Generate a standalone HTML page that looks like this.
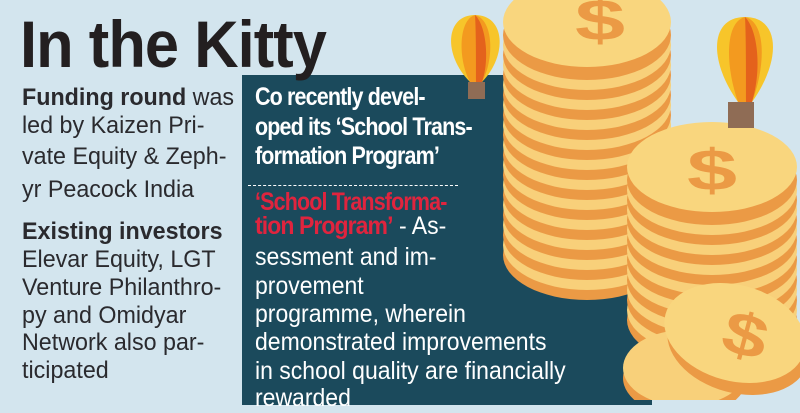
<!DOCTYPE html>
<html><head><meta charset="utf-8"><style>
html,body{margin:0;padding:0}
body{width:800px;height:400px;overflow:hidden;background:#d3e5ee;position:relative;font-family:"Liberation Sans",sans-serif}
.box{position:absolute;left:242px;top:75px;width:410px;height:330px;background:#1b4a5c}
.t{position:absolute;white-space:nowrap;transform-origin:0 0}
.title{left:20px;top:6px;font-size:66px;font-weight:bold;color:#231f20;transform:scaleX(0.93);letter-spacing:-1px}
.l{left:22px;font-size:24px;color:#2a2a2e;transform:scaleX(0.97)}
.r{left:255px;font-size:25px;color:#fff;transform:scaleX(0.92)}
.rb{transform:scaleX(0.86)}
.b{font-weight:bold}
.red{color:#e0243e;font-weight:bold}
svg{position:absolute;left:0;top:0}
</style></head><body>
<div class="box"></div>
<div class="t title">In the Kitty</div>
<div class="t l" style="top:84px"><span class="b">Funding round</span> was</div>
<div class="t l" style="top:112px">led by Kaizen Pri-</div>
<div class="t l" style="top:143px">vate Equity &amp; Zeph-</div>
<div class="t l" style="top:176px">yr Peacock India</div>
<div class="t l b" style="top:218px">Existing investors</div>
<div class="t l" style="top:246px">Elevar Equity, LGT</div>
<div class="t l" style="top:274px">Venture Philanthro-</div>
<div class="t l" style="top:302px">py and Omidyar</div>
<div class="t l" style="top:329px">Network also par-</div>
<div class="t l" style="top:357px">ticipated</div>

<div class="t r rb b" style="top:83px;letter-spacing:-1px">Co recently devel-</div>
<div class="t r rb b" style="top:113px;letter-spacing:-1px">oped its ‘School Trans-</div>
<div class="t r rb b" style="top:142px;letter-spacing:-1px">formation Program’</div>
<div style="position:absolute;left:248px;top:185px;width:210px;border-top:1.5px dashed #fff"></div>
<div class="t r rb red" style="top:188px;letter-spacing:-1px">‘School Transforma-</div>
<div class="t r" style="top:212px"><span class="red" style="letter-spacing:-1px">tion Program’</span> - As-</div>
<div class="t r" style="top:243px">sessment and im-</div>
<div class="t r" style="top:272px">provement</div>
<div class="t r" style="top:300px">programme, wherein</div>
<div class="t r" style="top:328px">demonstrated improvements</div>
<div class="t r" style="top:357px">in school quality are financially</div>
<div class="t r" style="top:384px">rewarded</div>

<svg width="800" height="400" viewBox="0 0 800 400">
<g>
<ellipse cx="587" cy="255" rx="84" ry="45" fill="#eb9a45"/><ellipse cx="587" cy="245" rx="84" ry="45" fill="#f8d07a"/>
<ellipse cx="587" cy="235" rx="84" ry="45" fill="#eb9a45"/><ellipse cx="587" cy="225" rx="84" ry="45" fill="#f8d07a"/>
<ellipse cx="587" cy="215" rx="84" ry="45" fill="#eb9a45"/><ellipse cx="587" cy="205" rx="84" ry="45" fill="#f8d07a"/>
<ellipse cx="587" cy="195" rx="84" ry="45" fill="#eb9a45"/><ellipse cx="587" cy="185" rx="84" ry="45" fill="#f8d07a"/>
<ellipse cx="587" cy="175" rx="84" ry="45" fill="#eb9a45"/><ellipse cx="587" cy="165" rx="84" ry="45" fill="#f8d07a"/>
<ellipse cx="587" cy="155" rx="84" ry="45" fill="#eb9a45"/><ellipse cx="587" cy="145" rx="84" ry="45" fill="#f8d07a"/>
<ellipse cx="587" cy="135" rx="84" ry="45" fill="#eb9a45"/><ellipse cx="587" cy="125" rx="84" ry="45" fill="#f8d07a"/>
<ellipse cx="587" cy="115" rx="84" ry="45" fill="#eb9a45"/><ellipse cx="587" cy="105" rx="84" ry="45" fill="#f8d07a"/>
<ellipse cx="587" cy="95" rx="84" ry="45" fill="#eb9a45"/><ellipse cx="587" cy="85" rx="84" ry="45" fill="#f8d07a"/>
<ellipse cx="587" cy="75" rx="84" ry="45" fill="#eb9a45"/><ellipse cx="587" cy="65" rx="84" ry="45" fill="#f8d07a"/>
<ellipse cx="587" cy="55" rx="84" ry="45" fill="#eb9a45"/><ellipse cx="587" cy="45" rx="84" ry="45" fill="#f8d07a"/>
<ellipse cx="587" cy="35" rx="84" ry="45" fill="#eb9a45"/><ellipse cx="587" cy="22" rx="84" ry="45" fill="#f9d67e"/>
<text transform="translate(600,40) scale(1,0.65)" font-size="90" font-weight="bold" fill="#eb9a45" text-anchor="middle" font-family="Liberation Sans">$</text>
</g>
<g>
<ellipse cx="712" cy="320" rx="85" ry="45" fill="#eb9a45"/><ellipse cx="712" cy="310" rx="85" ry="45" fill="#f8d07a"/>
<ellipse cx="712" cy="300" rx="85" ry="45" fill="#eb9a45"/><ellipse cx="712" cy="290" rx="85" ry="45" fill="#f8d07a"/>
<ellipse cx="712" cy="280" rx="85" ry="45" fill="#eb9a45"/><ellipse cx="712" cy="270" rx="85" ry="45" fill="#f8d07a"/>
<ellipse cx="712" cy="260" rx="85" ry="45" fill="#eb9a45"/><ellipse cx="712" cy="250" rx="85" ry="45" fill="#f8d07a"/>
<ellipse cx="712" cy="240" rx="85" ry="45" fill="#eb9a45"/><ellipse cx="712" cy="230" rx="85" ry="45" fill="#f8d07a"/>
<ellipse cx="712" cy="220" rx="85" ry="45" fill="#eb9a45"/><ellipse cx="712" cy="210" rx="85" ry="45" fill="#f8d07a"/>
<ellipse cx="712" cy="200" rx="85" ry="45" fill="#eb9a45"/><ellipse cx="712" cy="190" rx="85" ry="45" fill="#f8d07a"/>
<ellipse cx="712" cy="180" rx="85" ry="45" fill="#eb9a45"/><ellipse cx="712" cy="167" rx="85" ry="45" fill="#f9d67e"/>
<text transform="translate(712,190) scale(1,0.65)" font-size="90" font-weight="bold" fill="#eb9a45" text-anchor="middle" font-family="Liberation Sans">$</text>
</g>
<g>
<ellipse cx="685" cy="378" rx="62" ry="38" fill="#eb9a45"/>
<ellipse cx="685" cy="368" rx="62" ry="38" fill="#f8d07a"/>
<ellipse cx="738" cy="345" rx="72" ry="48" fill="#eb9a45" transform="rotate(15 738 345)"/>
<ellipse cx="735" cy="333" rx="72" ry="48" fill="#f9d67e" transform="rotate(15 735 333)"/>
<text transform="translate(740,355) rotate(15) scale(1,0.75)" font-size="80" font-weight="bold" fill="#eb9a45" text-anchor="middle" font-family="Liberation Sans">$</text>
</g>
<g>
<path d="M475 15 C445 15 443 55 470 82 L482 82 C508 55 505 15 475 15Z" fill="#f7c52a"/>
<path d="M475 15 C458 20 458 60 470 82 L482 82 C494 60 494 20 475 15Z" fill="#f39a1f"/>
<path d="M475 15 C486 25 490 60 482 82 L476 82 C476 60 476 30 475 15Z" fill="#e4621c"/>
<rect x="468" y="82" width="17" height="17" fill="#8f6c55"/>
<path d="M745 17 C710 17 708 60 738 102 L752 102 C782 60 780 17 745 17Z" fill="#f7c52a"/>
<path d="M745 17 C725 22 725 65 738 102 L752 102 C766 65 766 22 745 17Z" fill="#f39a1f"/>
<path d="M745 17 C758 30 762 70 752 102 L746 102 C746 70 746 35 745 17Z" fill="#e4621c"/>
<rect x="728" y="102" width="26" height="26" fill="#8f6c55"/>
</g>
</svg>
</body></html>
